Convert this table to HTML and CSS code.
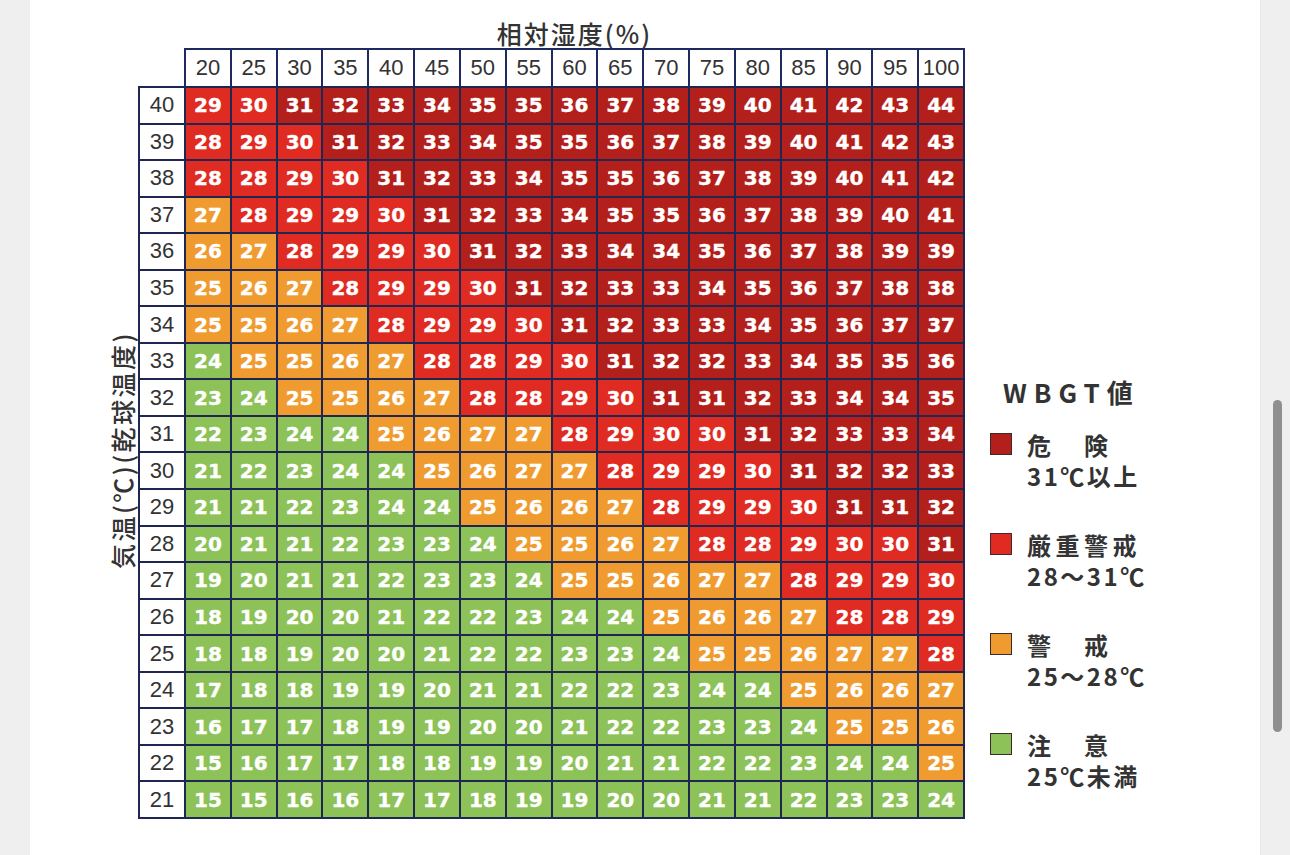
FILE: index.html
```html
<!DOCTYPE html>
<html lang="ja">
<head>
<meta charset="utf-8">
<title>WBGT値</title>
<link rel="stylesheet" href="styles.css">
</head>
<body>
<div class="page">
  <div class="gutter"></div>
  <main class="sheet">
    <div class="chart">
      <div class="title">相対湿度(%)</div>
      <div class="head">
        <div>20</div><div>25</div><div>30</div><div>35</div><div>40</div><div>45</div><div>50</div><div>55</div><div>60</div><div>65</div><div>70</div><div>75</div><div>80</div><div>85</div><div>90</div><div>95</div><div>100</div>
      </div>
      <div class="ylabel">気温(℃)(乾球温度)</div>
      <div class="grid">
        <div class="rh">40</div><div class="k3">29</div><div class="k3">30</div><div class="k4">31</div><div class="k4">32</div><div class="k4">33</div><div class="k4">34</div><div class="k4">35</div><div class="k4">35</div><div class="k4">36</div><div class="k4">37</div><div class="k4">38</div><div class="k4">39</div><div class="k4">40</div><div class="k4">41</div><div class="k4">42</div><div class="k4">43</div><div class="k4">44</div>
        <div class="rh">39</div><div class="k3">28</div><div class="k3">29</div><div class="k3">30</div><div class="k4">31</div><div class="k4">32</div><div class="k4">33</div><div class="k4">34</div><div class="k4">35</div><div class="k4">35</div><div class="k4">36</div><div class="k4">37</div><div class="k4">38</div><div class="k4">39</div><div class="k4">40</div><div class="k4">41</div><div class="k4">42</div><div class="k4">43</div>
        <div class="rh">38</div><div class="k3">28</div><div class="k3">28</div><div class="k3">29</div><div class="k3">30</div><div class="k4">31</div><div class="k4">32</div><div class="k4">33</div><div class="k4">34</div><div class="k4">35</div><div class="k4">35</div><div class="k4">36</div><div class="k4">37</div><div class="k4">38</div><div class="k4">39</div><div class="k4">40</div><div class="k4">41</div><div class="k4">42</div>
        <div class="rh">37</div><div class="k2">27</div><div class="k3">28</div><div class="k3">29</div><div class="k3">29</div><div class="k3">30</div><div class="k4">31</div><div class="k4">32</div><div class="k4">33</div><div class="k4">34</div><div class="k4">35</div><div class="k4">35</div><div class="k4">36</div><div class="k4">37</div><div class="k4">38</div><div class="k4">39</div><div class="k4">40</div><div class="k4">41</div>
        <div class="rh">36</div><div class="k2">26</div><div class="k2">27</div><div class="k3">28</div><div class="k3">29</div><div class="k3">29</div><div class="k3">30</div><div class="k4">31</div><div class="k4">32</div><div class="k4">33</div><div class="k4">34</div><div class="k4">34</div><div class="k4">35</div><div class="k4">36</div><div class="k4">37</div><div class="k4">38</div><div class="k4">39</div><div class="k4">39</div>
        <div class="rh">35</div><div class="k2">25</div><div class="k2">26</div><div class="k2">27</div><div class="k3">28</div><div class="k3">29</div><div class="k3">29</div><div class="k3">30</div><div class="k4">31</div><div class="k4">32</div><div class="k4">33</div><div class="k4">33</div><div class="k4">34</div><div class="k4">35</div><div class="k4">36</div><div class="k4">37</div><div class="k4">38</div><div class="k4">38</div>
        <div class="rh">34</div><div class="k2">25</div><div class="k2">25</div><div class="k2">26</div><div class="k2">27</div><div class="k3">28</div><div class="k3">29</div><div class="k3">29</div><div class="k3">30</div><div class="k4">31</div><div class="k4">32</div><div class="k4">33</div><div class="k4">33</div><div class="k4">34</div><div class="k4">35</div><div class="k4">36</div><div class="k4">37</div><div class="k4">37</div>
        <div class="rh">33</div><div class="k1">24</div><div class="k2">25</div><div class="k2">25</div><div class="k2">26</div><div class="k2">27</div><div class="k3">28</div><div class="k3">28</div><div class="k3">29</div><div class="k3">30</div><div class="k4">31</div><div class="k4">32</div><div class="k4">32</div><div class="k4">33</div><div class="k4">34</div><div class="k4">35</div><div class="k4">35</div><div class="k4">36</div>
        <div class="rh">32</div><div class="k1">23</div><div class="k1">24</div><div class="k2">25</div><div class="k2">25</div><div class="k2">26</div><div class="k2">27</div><div class="k3">28</div><div class="k3">28</div><div class="k3">29</div><div class="k3">30</div><div class="k4">31</div><div class="k4">31</div><div class="k4">32</div><div class="k4">33</div><div class="k4">34</div><div class="k4">34</div><div class="k4">35</div>
        <div class="rh">31</div><div class="k1">22</div><div class="k1">23</div><div class="k1">24</div><div class="k1">24</div><div class="k2">25</div><div class="k2">26</div><div class="k2">27</div><div class="k2">27</div><div class="k3">28</div><div class="k3">29</div><div class="k3">30</div><div class="k3">30</div><div class="k4">31</div><div class="k4">32</div><div class="k4">33</div><div class="k4">33</div><div class="k4">34</div>
        <div class="rh">30</div><div class="k1">21</div><div class="k1">22</div><div class="k1">23</div><div class="k1">24</div><div class="k1">24</div><div class="k2">25</div><div class="k2">26</div><div class="k2">27</div><div class="k2">27</div><div class="k3">28</div><div class="k3">29</div><div class="k3">29</div><div class="k3">30</div><div class="k4">31</div><div class="k4">32</div><div class="k4">32</div><div class="k4">33</div>
        <div class="rh">29</div><div class="k1">21</div><div class="k1">21</div><div class="k1">22</div><div class="k1">23</div><div class="k1">24</div><div class="k1">24</div><div class="k2">25</div><div class="k2">26</div><div class="k2">26</div><div class="k2">27</div><div class="k3">28</div><div class="k3">29</div><div class="k3">29</div><div class="k3">30</div><div class="k4">31</div><div class="k4">31</div><div class="k4">32</div>
        <div class="rh">28</div><div class="k1">20</div><div class="k1">21</div><div class="k1">21</div><div class="k1">22</div><div class="k1">23</div><div class="k1">23</div><div class="k1">24</div><div class="k2">25</div><div class="k2">25</div><div class="k2">26</div><div class="k2">27</div><div class="k3">28</div><div class="k3">28</div><div class="k3">29</div><div class="k3">30</div><div class="k3">30</div><div class="k4">31</div>
        <div class="rh">27</div><div class="k1">19</div><div class="k1">20</div><div class="k1">21</div><div class="k1">21</div><div class="k1">22</div><div class="k1">23</div><div class="k1">23</div><div class="k1">24</div><div class="k2">25</div><div class="k2">25</div><div class="k2">26</div><div class="k2">27</div><div class="k2">27</div><div class="k3">28</div><div class="k3">29</div><div class="k3">29</div><div class="k3">30</div>
        <div class="rh">26</div><div class="k1">18</div><div class="k1">19</div><div class="k1">20</div><div class="k1">20</div><div class="k1">21</div><div class="k1">22</div><div class="k1">22</div><div class="k1">23</div><div class="k1">24</div><div class="k1">24</div><div class="k2">25</div><div class="k2">26</div><div class="k2">26</div><div class="k2">27</div><div class="k3">28</div><div class="k3">28</div><div class="k3">29</div>
        <div class="rh">25</div><div class="k1">18</div><div class="k1">18</div><div class="k1">19</div><div class="k1">20</div><div class="k1">20</div><div class="k1">21</div><div class="k1">22</div><div class="k1">22</div><div class="k1">23</div><div class="k1">23</div><div class="k1">24</div><div class="k2">25</div><div class="k2">25</div><div class="k2">26</div><div class="k2">27</div><div class="k2">27</div><div class="k3">28</div>
        <div class="rh">24</div><div class="k1">17</div><div class="k1">18</div><div class="k1">18</div><div class="k1">19</div><div class="k1">19</div><div class="k1">20</div><div class="k1">21</div><div class="k1">21</div><div class="k1">22</div><div class="k1">22</div><div class="k1">23</div><div class="k1">24</div><div class="k1">24</div><div class="k2">25</div><div class="k2">26</div><div class="k2">26</div><div class="k2">27</div>
        <div class="rh">23</div><div class="k1">16</div><div class="k1">17</div><div class="k1">17</div><div class="k1">18</div><div class="k1">19</div><div class="k1">19</div><div class="k1">20</div><div class="k1">20</div><div class="k1">21</div><div class="k1">22</div><div class="k1">22</div><div class="k1">23</div><div class="k1">23</div><div class="k1">24</div><div class="k2">25</div><div class="k2">25</div><div class="k2">26</div>
        <div class="rh">22</div><div class="k1">15</div><div class="k1">16</div><div class="k1">17</div><div class="k1">17</div><div class="k1">18</div><div class="k1">18</div><div class="k1">19</div><div class="k1">19</div><div class="k1">20</div><div class="k1">21</div><div class="k1">21</div><div class="k1">22</div><div class="k1">22</div><div class="k1">23</div><div class="k1">24</div><div class="k1">24</div><div class="k2">25</div>
        <div class="rh">21</div><div class="k1">15</div><div class="k1">15</div><div class="k1">16</div><div class="k1">16</div><div class="k1">17</div><div class="k1">17</div><div class="k1">18</div><div class="k1">19</div><div class="k1">19</div><div class="k1">20</div><div class="k1">20</div><div class="k1">21</div><div class="k1">21</div><div class="k1">22</div><div class="k1">23</div><div class="k1">23</div><div class="k1">24</div>
      </div>
      <aside class="legend">
        <div class="legend-title">WBGT値</div>
        <div class="legend-item">
          <span class="swatch k4"></span>
          <div class="legend-text"><div class="lt-name">危　険</div><div class="lt-range">31℃以上</div></div>
        </div>
        <div class="legend-item">
          <span class="swatch k3"></span>
          <div class="legend-text"><div class="lt-name">厳重警戒</div><div class="lt-range">28～31℃</div></div>
        </div>
        <div class="legend-item">
          <span class="swatch k2"></span>
          <div class="legend-text"><div class="lt-name">警　戒</div><div class="lt-range">25～28℃</div></div>
        </div>
        <div class="legend-item">
          <span class="swatch k1"></span>
          <div class="legend-text"><div class="lt-name">注　意</div><div class="lt-range">25℃未満</div></div>
        </div>
      </aside>
    </div>
  </main>
  <div class="gutter gutter-right"><div class="thumb"></div></div>
</div>
</body>
</html>
```

FILE: styles.css
```css
* { box-sizing: border-box; }
html, body { margin: 0; height: 100%; }
body {
  background: #efefef;
  font-family: "Liberation Sans", Arial, sans-serif;
  overflow: hidden;
}
.page { display: flex; height: 855px; }
.gutter { width: 30px; flex: none; }
.gutter-right { padding-top: 400px; padding-left: 12px; border-left: 1px solid #e8e8e8; }
.thumb { width: 9px; height: 332px; border-radius: 5px; background: #8f8f8f; }
.sheet { width: 1230px; flex: none; background: #fff; height: 855px; }

.chart {
  display: grid;
  grid-template-columns: 108px 827px auto;
  grid-template-rows: 48px 38px 733px;
}
.title {
  grid-column: 2; grid-row: 1;
  padding-left: 46px; padding-top: 20px;
  text-align: center;
  font-family: "Noto Sans CJK JP", sans-serif;
  font-size: 25px; line-height: 26px; color: #333;
  font-weight: 500;
  letter-spacing: 2px;
}
.head {
  grid-column: 2; grid-row: 2;
  margin-left: 46px;
  display: grid;
  grid-template-columns: repeat(17, 1fr);
  column-gap: 2px;
  padding: 2px 2px 0;
  background: #1f2a60;
}
.head div, .grid .rh {
  background: #fff;
  display: flex; align-items: center; justify-content: center;
  font-size: 22px; color: #333;
}
.ylabel {
  grid-column: 1; grid-row: 3;
  align-self: center; justify-self: end;
  margin-right: 3px;
  margin-bottom: 4px;
  writing-mode: vertical-rl;
  text-orientation: sideways;
  transform: rotate(180deg);
  font-family: "Noto Sans CJK JP", sans-serif;
  font-size: 25px; line-height: 26px; color: #333;
  font-weight: 500;
  letter-spacing: 2.5px;
}
.grid {
  grid-column: 2; grid-row: 3;
  display: grid;
  grid-template-columns: 44px repeat(17, 1fr);
  grid-template-rows: repeat(20, 1fr);
  gap: 2px; padding: 2px;
  background: #1f2652;
}
.grid div:not(.rh) {
  display: flex; align-items: center; justify-content: center;
  font-family: "DejaVu Sans", sans-serif;
  font-weight: bold; font-size: 20px; color: #fff;
  -webkit-text-stroke: 0.4px #fff;
}
.k4 { background: #b31f1b; }
.k3 { background: #e02b22; }
.k2 { background: #ef9b30; }
.k1 { background: #8cc257; }

.legend {
  grid-column: 3; grid-row: 1 / span 3;
  margin-left: 25px;
  padding-top: 377px;
  font-family: "Noto Sans CJK JP", sans-serif;
  color: #333;
}
.legend-title {
  margin-left: 13px;
  font-size: 26px; line-height: 30px; font-weight: bold;
  letter-spacing: 7px;
  margin-bottom: 22px;
}
.legend-item { display: flex; gap: 15px; margin-bottom: 38px; }
.swatch {
  flex: none; width: 22px; height: 22px; margin-top: 4px;
  border: 1.5px solid #3a2a2a;
}
.legend-text {
  font-size: 24px; line-height: 31px; font-weight: bold;
}
.lt-name { letter-spacing: 4.5px; }
.lt-range { letter-spacing: 2.5px; }
```
